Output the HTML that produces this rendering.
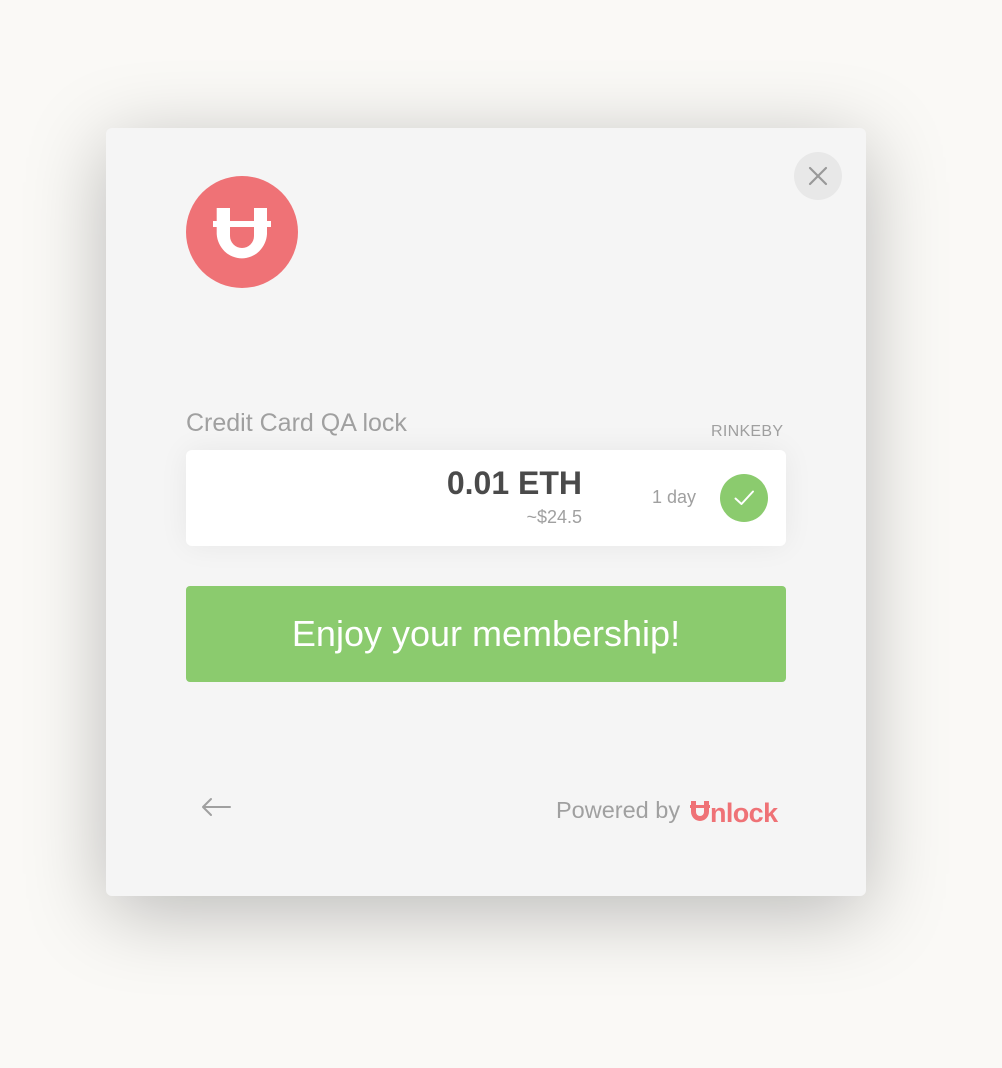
<!DOCTYPE html>
<html><head><meta charset="utf-8"><style>
html,body{margin:0;padding:0}
body{width:1002px;height:1068px;background:#faf9f6;position:relative;overflow:hidden;font-family:"Liberation Sans",sans-serif}
.modal{position:absolute;left:106px;top:128px;width:760px;height:768px;background:#f5f5f5;border-radius:6px;box-shadow:0 16px 80px rgba(0,0,0,0.26)}
.abs{position:absolute}
</style></head><body>
<div class="modal"></div>
<div class="abs" style="left:794px;top:152px;width:48px;height:48px;border-radius:50%;background:#e8e8e8"></div>
<svg class="abs" style="left:794px;top:152px" width="48" height="48"><path d="M16 16L32 32M32 16L16 32" stroke="#999" stroke-width="2.2" stroke-linecap="round"/></svg>
<svg class="abs" style="left:0;top:0" width="1002" height="400">
<circle cx="242" cy="232" r="56" fill="#ef7276"/>
<path d="M216.7 208H230V236a12 12 0 0 0 24 0V208H267V234a25.2 26 0 0 1 -50.3 0Z" fill="#fff"/>
<rect x="213" y="221" width="58" height="6" fill="#fff"/>
</svg>
<div class="abs" style="left:186px;top:409px;font-size:25px;color:#a0a0a0">Credit Card QA lock</div>
<div class="abs" style="left:711px;top:423px;font-size:16px;color:#a0a0a0;letter-spacing:0.3px">RINKEBY</div>
<div class="abs" style="left:186px;top:450px;width:600px;height:96px;background:#fff;border-radius:6px;box-shadow:0 0 30px rgba(0,0,0,0.06)"></div>
<div class="abs" style="left:380px;top:465px;width:202px;text-align:right;font-size:32px;font-weight:bold;color:#4a4a4a">0.01 ETH</div>
<div class="abs" style="left:380px;top:507px;width:202px;text-align:right;font-size:18px;color:#a0a0a0">~$24.5</div>
<div class="abs" style="left:652px;top:487px;font-size:18px;color:#a0a0a0">1 day</div>
<div class="abs" style="left:720px;top:474px;width:48px;height:48px;border-radius:50%;background:#8bcb6e"></div>
<svg class="abs" style="left:720px;top:474px" width="48" height="48"><path d="M15.5 24.5L21.5 30L33 17.5" fill="none" stroke="#fff" stroke-width="2" stroke-linecap="round" stroke-linejoin="round"/></svg>
<div class="abs" style="left:186px;top:586px;width:600px;height:96px;background:#8bcb6e;border-radius:4px;color:#fff;font-size:36px;text-align:center;line-height:96px">Enjoy your membership!</div>
<svg class="abs" style="left:196px;top:792px" width="40" height="30"><path d="M7 15H34M7 15L15 7M7 15L15 23" fill="none" stroke="#a0a0a0" stroke-width="2" stroke-linecap="round"/></svg>
<div class="abs" style="left:556px;top:797px;font-size:23.5px;color:#a0a0a0">Powered by</div>
<svg class="abs" style="left:688px;top:798px" width="24" height="26">
<path d="M3 3H8V14a4 4 0 0 0 8 0V3H21V13.5a9 9.5 0 0 1 -18 0Z" fill="#ef7276"/>
<rect x="2" y="7" width="20" height="3" fill="#ef7276"/>
</svg>
<div class="abs" style="left:710px;top:800px;font-size:27px;line-height:27px;font-weight:bold;color:#ef7276;letter-spacing:-0.6px">nlock</div>
</body></html>
